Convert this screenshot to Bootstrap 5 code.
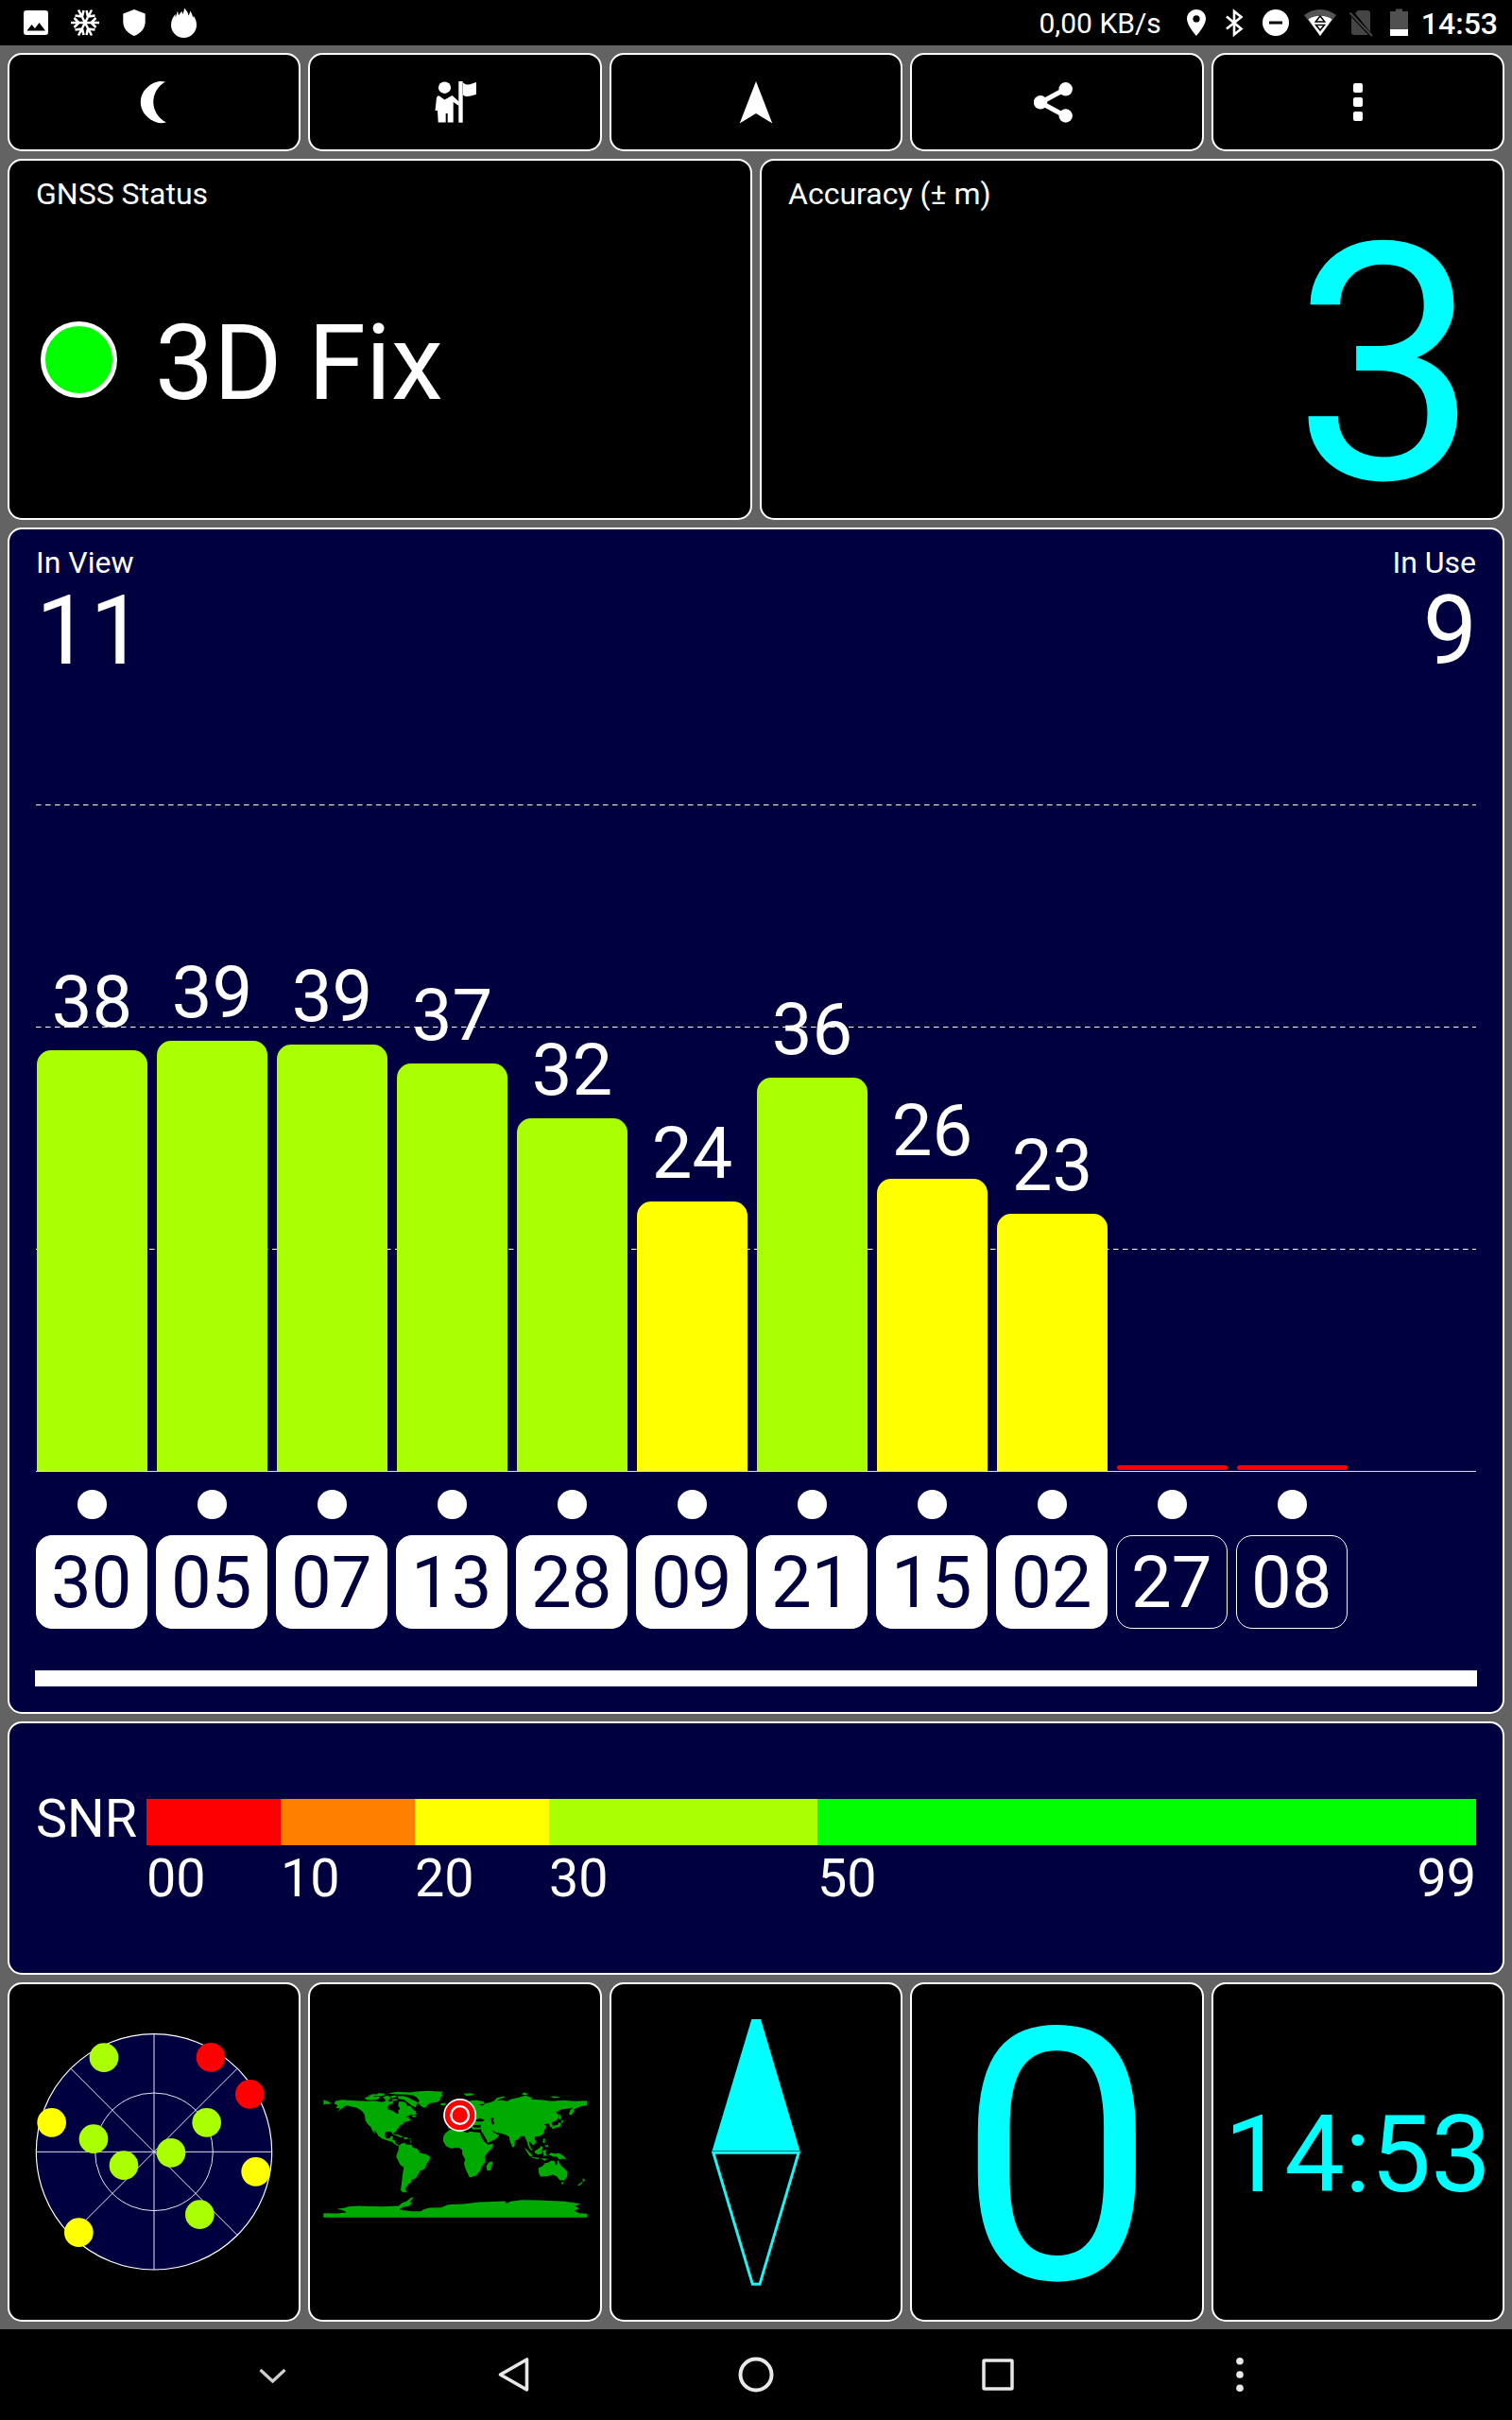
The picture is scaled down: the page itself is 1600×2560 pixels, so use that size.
<!DOCTYPE html>
<html lang="en">
<head>
<meta charset="utf-8">
<meta name="viewport" content="width=device-width, initial-scale=1">
<title>GPS Status</title>
<link href="https://cdn.jsdelivr.net/npm/bootstrap@5.3.0/dist/css/bootstrap.min.css" rel="stylesheet">
<style>
  body { background: #636363; color: #fff; font-family: Roboto, "Liberation Sans", sans-serif; height: 2560px; overflow: hidden; }
  svg { display: block; flex: none; }
  .statusbar { height: 48px; background: #000; padding: 0 15px 0 25px; }
  .net-speed { font-size: 30px; line-height: 48px; margin-right: 27px; padding-top: 2px; }
  .clock { font-size: 32px; font-weight: 500; line-height: 48px; padding-top: 1px; }
  .tile { background: #000; border: 2px solid #fff; border-radius: 15px; color: #fff; }
  .navy { background: #000040; }
  .tool { height: 104px; padding: 0; }
  .tool:hover { background: #222; }
  .info { height: 382px; padding: 16px 28px 12px; }
  .caption-sm { font-size: 32px; line-height: 38px; }
  .led { width: 81px; height: 81px; border: 5px solid #fff; border-radius: 50%; background: #0f0; margin: 0 40px 0 5px; }
  .fix-text { font-size: 110.5px; line-height: 120px; padding-top: 8px; }
  .cyan { color: #0ff; }
  .accuracy { font-size: 350px; line-height: 300px; padding-top: 11px; margin-right: -3px; }
  .signal { height: 1255px; padding: 16px 28px 0; }
  .count { font-size: 102px; line-height: 106px; }
  .in-use { margin-right: -1px; }
  .plot { height: 837px; border-bottom: 1px solid #dcdce6; }
  .gridlines { top: 0; left: 0; }
  .sat { width: 127px; padding: 0 9px 0 1px; position: relative; }
  .sat-val { font-size: 76px; line-height: 80px; margin-bottom: 11px; }
  .sat-bar { width: 116.5px; border-radius: 15px 15px 0 0; }
  .sat-bar.weak { border-radius: 3px; margin-bottom: 1px; }
  .lime { background: #af0; } .yellow { background: #ff0; } .red { background: #f00; }
  .orange { background: #ff8000; } .green { background: #0f0; }
  .dots { height: 67px; padding-top: 1px; }
  .dot { width: 31px; height: 31px; border-radius: 50%; background: #fff; }
  .sat-id { width: 117.5px; height: 99px; margin-right: 9.5px; border: 1px solid #fff; border-radius: 17px; font-size: 76px; line-height: 99px; text-align: center; }
  .sat-id.used { background: #fff; color: #000040; }
  .scroller { height: 17px; background: #fff; margin: 44px -1px 0; }
  .snr { height: 268px; padding: 80px 28px 0; font-size: 55.7px; }
  .snr-name { width: 117px; line-height: 43px; }
  .scale-bar { height: 49px; }
  .scale-num { line-height: 70px; }
  .w10 { width: 142px; } .w20 { width: 284px; }
  .bottom-tile { height: 359px; }
  .speed { font-size: 372px; line-height: 355px; padding-top: 14px; }
  .time { font-size: 113.5px; line-height: 120px; padding-top: 6px; }
  .navbar-soft { height: 96px; background: #000; }
  .nav-key { width: 256px; height: 96px; }
</style>
</head>
<body>
<header class="statusbar d-flex align-items-center">
  <svg width="26" height="48" viewBox="25 0 26 48"><path fill="#fff" fill-rule="evenodd" d="M28 11h20a3 3 0 0 1 3 3v20a3 3 0 0 1-3 3H28a3 3 0 0 1-3-3V14a3 3 0 0 1 3-3zm.5 21.500h19.500l-6.500-8.500-4.500 6-3.500-4z"/></svg>
  <svg width="31" height="48" viewBox="75 0 31 48" style="margin-left:24px"><path fill="none" stroke="#fff" stroke-width="2.500" d="M75 24h30M83 10.500l14 27M97 10.500l-14 27M78.500 19l5 5-5 5M101.500 19l-5 5 5 5M79.500 16.500l7.500 1 1.500-6.500M100.500 16.500l-7.500 1-1.500-6.500M79.500 31.500l7.500-1 1.500 6.500M100.500 31.500l-7.500-1-1.500 6.500"/></svg>
  <svg width="24" height="48" viewBox="130 0 24 48" style="margin-left:24px"><path fill="#fff" d="M142 10l11.700 4.500V23c0 7-5 12.500-11.700 15-6.700-2.500-11.700-8-11.700-15v-8.500z"/></svg>
  <svg width="28" height="48" viewBox="181 0 28 48" style="margin-left:27px"><path fill="#fff" d="M195 8.500c2.500 2.500 4 5 4.500 8 1-1.500 1.500-3 1.500-5 2 2.500 2.800 4.500 3 7l1-1.500c2 3 3 6 3 9.500 0 7.500-6 13.500-13.500 13.500S181 34 181 26.500c0-4 1.500-8 4.500-11.500l.3 3.500 2.200-7 1 5c1-2 2-3 3.500-4.500l.8 3c1-2 1.500-4 1.700-6.500z"/></svg>
  <div class="net-speed ms-auto">0,00 KB/s</div>
  <svg width="20" height="48" viewBox="1256 0 20 48"><path fill="#fff" fill-rule="evenodd" d="M1266 10c5.600 0 10 4.400 10 9.800 0 7.200-10 18.200-10 18.200s-10-11-10-18.200c0-5.400 4.400-9.800 10-9.800zm0 6.300a3.600 3.600 0 1 0 0 7.200 3.600 3.600 0 0 0 0-7.200z"/></svg>
  <svg width="20" height="48" viewBox="1296 0 20 48" style="margin-left:20px"><path fill="none" stroke="#fff" stroke-width="2.600" d="M1298 17.500l15.500 13-7.500 6V12l7.500 6-15.500 12.500"/></svg>
  <svg width="28" height="48" viewBox="1336 0 28 48" style="margin-left:20px"><circle cx="1350" cy="24" r="14" fill="#fff"/><path d="M1343 22.500h14v3h-14z"/></svg>
  <svg width="34" height="48" viewBox="1380 0 34 48" style="margin-left:16px"><path fill="#555" d="M1380 16c10-8 24-8 34 0l-17 22z"/><path fill="#fff" d="M1384.500 20.500c7-5 18-5 25 0L1397 38z"/><path fill="none" stroke="#000" stroke-width="1.500" d="M1397 17l-4.800 6h9.600zM1397 32l-4.500-5.500h9z"/></svg>
  <svg width="25" height="48" viewBox="1428 0 25 48" style="margin-left:14px"><path fill="#454545" d="M1437 11h10a3 3 0 0 1 3 3v20L1434 14zM1430 18l18 19h-15a3 3 0 0 1-3-3z"/><path fill="none" stroke="#454545" stroke-width="2" d="M1428.500 13.500L1452 38"/></svg>
  <svg width="19" height="48" viewBox="1471 0 19 48" style="margin-left:18px"><path fill="#505050" d="M1477 9.500h7V12h6v26h-19V12h6z"/><path fill="#fff" d="M1471 31h19v7h-19z"/></svg>
  <div class="clock" style="margin-left:14px">14:53</div>
</header>

<main class="d-flex flex-column gap-2 p-2">
  <div class="d-flex gap-2">
    <button class="tile tool col d-flex align-items-center justify-content-center" aria-label="Night mode"><svg width="30" height="48" viewBox="147.500 84 30 48"><path fill="#fff" d="M174.500 86.500c-17 10-17 33 .8 43-4 1.200-9 1-13-1.200-8-4-14-11-14-20.300s6-16.500 14-20.300c4-1.800 8-2.200 12.200-1.200z"/></svg></button>
    <button class="tile tool col d-flex align-items-center justify-content-center" aria-label="Guide"><svg width="46" height="48" viewBox="459 84 46 48"><g fill="#fff"><ellipse cx="470.500" cy="92.700" rx="6.600" ry="6.200"/><path d="M464 101l6.500 4.500 8-4.500 7.200 6.500v4.500l-6-4v21.500h-6V120h-2v9.500h-8L463 117h-2.500l1.500-14z"/><path d="M485.300 86h4.400v43.700h-4.400z"/><path d="M490 87.500c5 4 9 1 14-.5v13c-5 .5-9 4-14 .5z"/></g></svg></button>
    <button class="tile tool col d-flex align-items-center justify-content-center" aria-label="Navigate"><svg width="36" height="48" viewBox="782 84 36 48"><path fill="#fff" d="M800 86l17.300 44.500L800 120l-17.300 10.500z"/></svg></button>
    <button class="tile tool col d-flex align-items-center justify-content-center" aria-label="Share"><svg width="48" height="48" viewBox="1094 84 48 48"><g fill="#fff"><circle cx="1101" cy="108.300" r="7.200"/><circle cx="1127.700" cy="94.300" r="7.200"/><circle cx="1127.700" cy="122.500" r="7.200"/></g><path fill="none" stroke="#fff" stroke-width="5" d="M1127 94.500l-26 14 26 14"/></svg></button>
    <button class="tile tool col d-flex align-items-center justify-content-center" aria-label="More"><svg width="10" height="48" viewBox="1432 84 10 48"><g fill="#fff"><rect x="1432" y="88" width="10" height="10" rx="2"/><rect x="1432" y="103" width="10" height="10" rx="2"/><rect x="1432" y="118" width="10" height="10" rx="2"/></g></svg></button>
  </div>

  <div class="d-flex gap-2">
    <section class="tile info col d-flex flex-column">
      <div class="caption-sm">GNSS Status</div>
      <div class="flex-grow-1 d-flex align-items-center"><span class="led"></span><span class="fix-text">3D Fix</span></div>
    </section>
    <section class="tile info col d-flex flex-column">
      <div class="caption-sm">Accuracy (± m)</div>
      <div class="flex-grow-1 d-flex align-items-center justify-content-end"><span class="accuracy cyan">3</span></div>
    </section>
  </div>

  <section class="tile navy signal">
    <div class="d-flex justify-content-between">
      <div><div class="caption-sm">In View</div><div class="count">11</div></div>
      <div class="text-end"><div class="caption-sm">In Use</div><div class="count in-use">9</div></div>
    </div>
    <div class="plot d-flex align-items-end position-relative">
      <svg class="gridlines position-absolute" width="1524" height="836" stroke="#fff" stroke-dasharray="5.500 4.500"><path d="M0 131.500H1524M0 366.500H1524M0 601.500H1524"/></svg>
      <div class="sat text-center"><div class="sat-val">38</div><div class="sat-bar lime" style="height:445.500px"></div></div>
      <div class="sat text-center"><div class="sat-val">39</div><div class="sat-bar lime" style="height:455.500px"></div></div>
      <div class="sat text-center"><div class="sat-val">39</div><div class="sat-bar lime" style="height:451.500px"></div></div>
      <div class="sat text-center"><div class="sat-val">37</div><div class="sat-bar lime" style="height:431.500px"></div></div>
      <div class="sat text-center"><div class="sat-val">32</div><div class="sat-bar lime" style="height:373px"></div></div>
      <div class="sat text-center"><div class="sat-val">24</div><div class="sat-bar yellow" style="height:285.500px"></div></div>
      <div class="sat text-center"><div class="sat-val">36</div><div class="sat-bar lime" style="height:416.500px"></div></div>
      <div class="sat text-center"><div class="sat-val">26</div><div class="sat-bar yellow" style="height:309.500px"></div></div>
      <div class="sat text-center"><div class="sat-val">23</div><div class="sat-bar yellow" style="height:272.500px"></div></div>
      <div class="sat"><div class="sat-bar weak red" style="height:5px"></div></div>
      <div class="sat"><div class="sat-bar weak red" style="height:5px"></div></div>
    </div>
    <div class="dots d-flex align-items-center">
      <div class="sat d-flex justify-content-center"><span class="dot"></span></div>
      <div class="sat d-flex justify-content-center"><span class="dot"></span></div>
      <div class="sat d-flex justify-content-center"><span class="dot"></span></div>
      <div class="sat d-flex justify-content-center"><span class="dot"></span></div>
      <div class="sat d-flex justify-content-center"><span class="dot"></span></div>
      <div class="sat d-flex justify-content-center"><span class="dot"></span></div>
      <div class="sat d-flex justify-content-center"><span class="dot"></span></div>
      <div class="sat d-flex justify-content-center"><span class="dot"></span></div>
      <div class="sat d-flex justify-content-center"><span class="dot"></span></div>
      <div class="sat d-flex justify-content-center"><span class="dot"></span></div>
      <div class="sat d-flex justify-content-center"><span class="dot"></span></div>
    </div>
    <div class="d-flex">
      <div class="sat-id used">30</div><div class="sat-id used">05</div><div class="sat-id used">07</div><div class="sat-id used">13</div><div class="sat-id used">28</div><div class="sat-id used">09</div><div class="sat-id used">21</div><div class="sat-id used">15</div><div class="sat-id used">02</div><div class="sat-id">27</div><div class="sat-id">08</div>
    </div>
    <div class="scroller"></div>
  </section>

  <section class="tile navy snr">
    <div class="d-flex">
      <div class="snr-name">SNR</div>
      <div class="flex-grow-1">
        <div class="scale-bar d-flex"><span class="w10 red"></span><span class="w10 orange"></span><span class="w10 yellow"></span><span class="w20 lime"></span><span class="flex-grow-1 green"></span></div>
        <div class="scale-num d-flex"><span class="w10">00</span><span class="w10">10</span><span class="w10">20</span><span class="w20">30</span><span>50</span><span class="ms-auto">99</span></div>
      </div>
    </div>
  </section>

  <div class="d-flex gap-2">
    <section class="tile bottom-tile col d-flex align-items-center justify-content-center">
      <svg width="280" height="280" viewBox="70 171 840 840">
        <circle cx="490" cy="589" r="374" fill="#000040" stroke="#fff" stroke-width="3.500"/>
        <g fill="none" stroke="#e4e4ee" stroke-width="3"><circle cx="490" cy="589" r="187"/><path d="M116 589H864M490 215V963M226 325L754 853M754 325L226 853"/></g>
        <g fill="#af0"><circle cx="331" cy="290" r="46"/><circle cx="298" cy="548" r="46"/><circle cx="394" cy="632" r="46"/><circle cx="544" cy="592" r="46"/><circle cx="657" cy="496" r="46"/><circle cx="635" cy="788" r="46"/></g>
        <g fill="#f00"><circle cx="670" cy="289" r="46"/><circle cx="794" cy="406" r="46"/></g>
        <g fill="#ff0"><circle cx="165" cy="496" r="46"/><circle cx="813" cy="652" r="46"/><circle cx="251" cy="845" r="46"/></g>
      </svg>
    </section>
    <section class="tile bottom-tile col d-flex align-items-center justify-content-center">
      <svg width="280" height="140" viewBox="65 50.500 840 420">
        <g fill="#0a0">
          <path d="M100 105L104 97 125 93 165 96 205 98 230 97 245 100 260 99 268 88 274 99 288 98 286 106 274 109 270 116 271 124 283 128 291 132 300 138 304 136 303 128 309 121 303 112 305 99 318 99 328 104 331 112 342 113 350 125 358 130 362 140 340 141 326 150 338 147 336 153 345 157 333 162 325 163 317 171 308 174 306 181 299 188 297 194 288 198 292 206 285 201 281 195 270 194 262 197 260 208 267 217 277 215 280 209 287 209 284 219 294 223 295 232 305 238 310 236 305 241 294 236 283 227 268 222 253 217 240 208 234 197 226 189 232 203 222 193 217 181 206 170 199 160 197 142 190 131 180 123 168 117 150 114 145 112 135 112 125 121 108 132 119 121 105 119 111 111z"/>
          <path d="M66 93L76 97 89 102 87 107 73 107 66 110z"/>
          <path d="M340 70L362 67 400 65 425 67 446 68 440 74 445 80 436 87 436 96 420 102 405 104 396 110 390 118 381 117 373 111 368 103 370 95 361 85 350 79 330 77 295 76 270 73 300 68z"/>
          <path d="M300 82L318 81 334 86 348 93 360 99 372 103 362 106 359 118 345 111 334 102 322 93 305 90zM196 88l12-6 14-2 6 4 14-1 2 5-10 5-16 2-14-1zM206 79l18-4 12 1 3-4 18 1 5 5-14 4-18-1zM254 84l16-4 9 5-4 8-12 1zM278 82l15-3 6 4-14 6zM282 92l12-2 8 5-16 3zM346 144l8-3 7 4-5 4-8-2z"/>
          <path d="M288 205L301 203 318 211 312 213 298 207zM319 214l10-2 7 4-12 3zM338 216h5v3h-5zM342 222l3 0 0 8-3 0z"/>
          <path d="M305 241L312 233 324 230 328 236 344 236 350 245 365 250 372 262 390 266 405 275 402 285 394 295 388 312 373 318 366 331 358 343 346 347 344 356 335 361 329 371 325 378 332 386 318 387 311 380 315 350 318 325 321 308 310 300 304 288 297 275 300 262 304 252z"/>
          <path d="M464 190L478 186 505 183 508 193 522 198 532 194 550 197 562 197 567 211 576 226 588 236 605 233 600 248 584 264 577 275 580 290 570 303 563 320 550 334 530 340 525 330 516 310 512 295 516 282 507 267 506 252 495 245 470 248 455 240 446 225 446 212 452 200zM583 303L590 293 600 288 603 294 596 317 587 319 583 311z"/>
          <path d="M462 184L460 168 475 166 470 150 495 145 505 130 520 140 530 96 553 95 575 99 578 106 560 108 570 113 580 105 590 103 608 97 630 95 650 98 660 92 690 85 706 80 730 88 724 92 760 94 790 98 830 95 860 98 902 96 902 112 889 112 868 120 860 124 862 130 853 142 846 140 848 128 858 118 840 122 820 124 804 133 814 142 812 152 803 160 790 165 795 178 786 180 781 168 766 171 774 177 768 188 764 202 752 209 738 210 736 218 741 228 732 238 724 229 718 226 722 242 731 256 722 251 715 238 712 225 704 209 692 209 686 217 673 224 673 240 667 245 659 228 655 210 645 205 630 200 613 197 600 189 608 199 623 205 615 216 588 230 579 220 566 195 567 186 540 188 536 181 528 185 515 170 510 178 490 172 476 184z"/>
          <path d="M438 105l12-2 5 4-6 5-12-2zM510 74l20-2 16 3-8 4-18 2zM608 96l8-9 22-5 4 3-22 8-6 6zM695 76l6-6 14 4-4 5zM785 83l20-1 12 4-20 2zM846 135l8-6 4 2-8 11zM814 152l3-15 3 8-1 14zM820 159l10 0-8 9zM789 182l10-7 10-2 6-10 5 8-4 9-13 2-8 4zM764 216l6 2-2 14-6-4zM767 235l6 4 5-4 2 7-8 2zM702 243l12 11 14 14 0 7-9-4-8-14zM728 275l22 3 0 4-22-4zM736 256l14-8 8-9 4 6-4 19-10 3-10-4zM762 254l14-2-5 6 6 16-6-5-5 6zM780 267l8-6 12 3 14-1 14 9 9 12-13-4-9 3-8-8-11-1zM755 280l12-1 10 2-8 6z"/>
          <path d="M748 310L762 303 768 295 780 292 790 286 801 289 800 297 807 300 810 284 819 301 832 313 841 322 839 338 830 350 816 348 807 337 794 331 775 336 755 337 750 328zM821 354l8 1-2 7-5-2zM889 342l8 7-8 5zM873 364l12-10 4 2-12 11z"/>
          <path d="M66 453L110 454 140 450 128 444 108 440 135 436 145 432 175 430 250 432 305 430 315 421 330 415 345 403 352 404 341 416 347 422 337 431 318 434 307 442 345 447 376 447 382 442 402 436 440 435 460 426 510 424 560 418 642 415 646 423 660 416 695 411 750 412 830 416 882 423 864 430 878 438 862 446 878 453 903 455 903 467 66 467z"/>
        </g>
        <path d="M551 157l10-5 8 2 9 4-8 4-18 0zM598 150l9 2-2 8 4 10-7 2-3-10zM541 174l24-1 0 9-24-1zM565 190l8 12 13 22-4 2-15-24z"/>
        <circle cx="499" cy="142" r="50" fill="#f00" stroke="#fff" stroke-width="5"/><circle cx="499" cy="142" r="28" fill="#f00" stroke="#fff" stroke-width="7"/>
      </svg>
    </section>
    <section class="tile bottom-tile col d-flex align-items-center justify-content-center">
      <svg width="100" height="290" viewBox="330 154 300 870"><path fill="#0ff" d="M466 166H495L619 583H341z"/><path fill="none" stroke="#1ff4f4" stroke-width="9" d="M344.500 589.500H615.500L492 1007H469z"/><path stroke="#0bb" stroke-width="2" d="M340 584H620"/></svg>
    </section>
    <section class="tile bottom-tile col d-flex align-items-center justify-content-center"><span class="speed cyan">0</span></section>
    <section class="tile bottom-tile col d-flex align-items-center justify-content-center"><span class="time cyan">14:53</span></section>
  </div>
</main>

<nav class="navbar-soft d-flex justify-content-center">
  <div class="nav-key d-flex align-items-center justify-content-center"><svg width="40" height="40" fill="none" stroke="#cfcfcf" stroke-width="3.200"><path d="M7.500 15L20.500 27 33.500 15"/></svg></div>
  <div class="nav-key d-flex align-items-center justify-content-center"><svg width="40" height="44" fill="none" stroke="#e8e8e8" stroke-width="3.600" stroke-linejoin="round"><path d="M5.500 22L33.500 6V38z"/></svg></div>
  <div class="nav-key d-flex align-items-center justify-content-center"><svg width="40" height="40" fill="none" stroke="#e8e8e8" stroke-width="4"><circle cx="20" cy="20" r="16.500"/></svg></div>
  <div class="nav-key d-flex align-items-center justify-content-center"><svg width="40" height="40" fill="none" stroke="#e8e8e8" stroke-width="3.500"><rect x="5" y="5" width="30" height="30" rx="1"/></svg></div>
  <div class="nav-key d-flex align-items-center justify-content-center"><svg width="40" height="40" fill="#e8e8e8"><circle cx="20" cy="5.700" r="3.800"/><circle cx="20" cy="20" r="3.800"/><circle cx="20" cy="34.300" r="3.800"/></svg></div>
</nav>
<script src="https://cdn.jsdelivr.net/npm/bootstrap@5.3.0/dist/js/bootstrap.bundle.min.js"></script>
</body>
</html>
